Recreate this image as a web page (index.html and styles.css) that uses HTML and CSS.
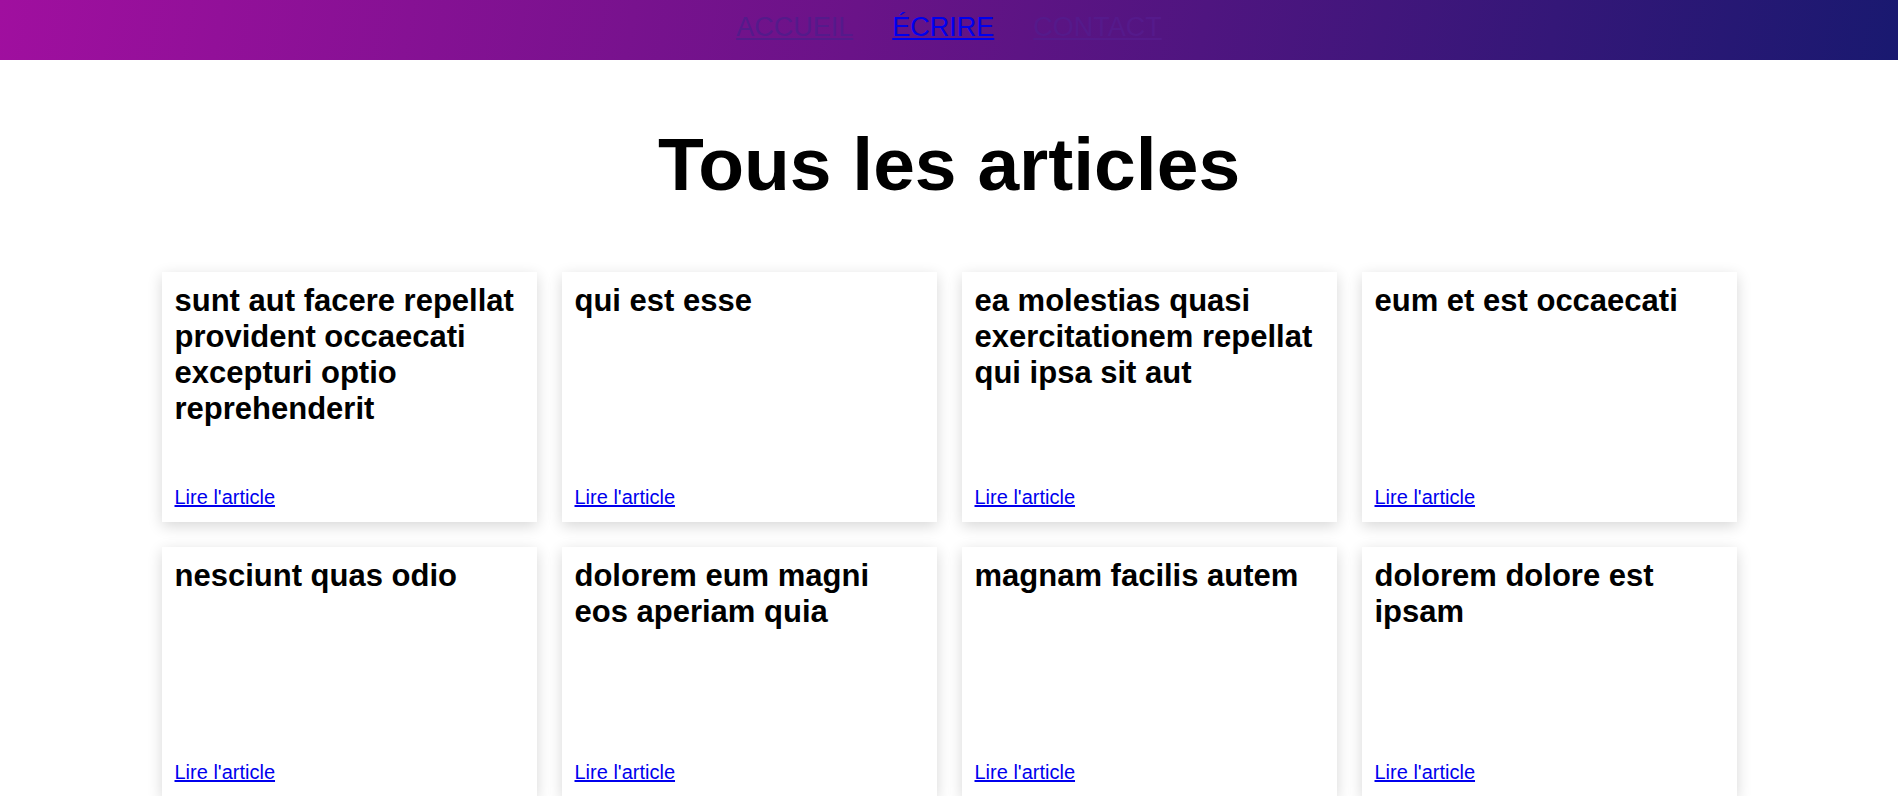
FILE: index.html
```html
<!DOCTYPE html>
<html lang="fr">
<head>
<meta charset="utf-8">
<title>Tous les articles</title>
<link rel="stylesheet" href="styles.css">
</head>
<body>
<header class="topbar">
  <nav class="nav">
    <a class="nav-link visited" href="#">Accueil</a>
    <a class="nav-link" href="#">Écrire</a>
    <a class="nav-link visited" href="#">Contact</a>
  </nav>
</header>
<main class="page">
  <h1 class="page-title">Tous les articles</h1>
  <section class="grid">
    <article class="card"><h2 class="card-title">sunt aut facere repellat provident occaecati excepturi optio reprehenderit</h2><a class="card-link" href="#">Lire l'article</a></article>
    <article class="card"><h2 class="card-title">qui est esse</h2><a class="card-link" href="#">Lire l'article</a></article>
    <article class="card"><h2 class="card-title">ea molestias quasi exercitationem repellat qui ipsa sit aut</h2><a class="card-link" href="#">Lire l'article</a></article>
    <article class="card"><h2 class="card-title">eum et est occaecati</h2><a class="card-link" href="#">Lire l'article</a></article>
    <article class="card"><h2 class="card-title">nesciunt quas odio</h2><a class="card-link" href="#">Lire l'article</a></article>
    <article class="card"><h2 class="card-title">dolorem eum magni eos aperiam quia</h2><a class="card-link" href="#">Lire l'article</a></article>
    <article class="card"><h2 class="card-title">magnam facilis autem</h2><a class="card-link" href="#">Lire l'article</a></article>
    <article class="card"><h2 class="card-title">dolorem dolore est ipsam</h2><a class="card-link" href="#">Lire l'article</a></article>
    <article class="card"><h2 class="card-title">nesciunt iure omnis dolorem tempora et accusantium</h2><a class="card-link" href="#">Lire l'article</a></article>
    <article class="card"><h2 class="card-title">optio molestias id quia eum</h2><a class="card-link" href="#">Lire l'article</a></article>
    <article class="card"><h2 class="card-title">et ea vero quia laudantium autem</h2><a class="card-link" href="#">Lire l'article</a></article>
    <article class="card"><h2 class="card-title">in quibusdam tempore odit est dolorem</h2><a class="card-link" href="#">Lire l'article</a></article>
  </section>
</main>
</body>
</html>
```
FILE: styles.css
```css
html, body {
  margin: 0;
  padding: 0;
  background: #ffffff;
  font-family: "Liberation Sans", Arial, sans-serif;
  color: #000000;
}

.topbar {
  height: 60px;
  background: linear-gradient(100deg, #a00f9f 0%, #6a1388 45%, #191970 100%);
  display: flex;
  justify-content: center;
  align-items: flex-start;
}

.nav {
  display: flex;
  gap: 39px;
  padding-top: 12px;
}

.nav-link {
  font-size: 27px;
  line-height: 31px;
  text-transform: uppercase;
  color: #0000ee;
  text-decoration: underline;
}

.nav-link.visited {
  color: #551a8b;
}

.page {
  padding: 0 0 40px;
}

.page-title {
  margin: 0;
  padding: 62px 0 65px;
  font-size: 75px;
  line-height: 85px;
  font-weight: bold;
  text-align: center;
}

.grid {
  display: grid;
  grid-template-columns: repeat(4, 375px);
  gap: 25px;
  justify-content: center;
}

.card {
  height: 250px;
  box-sizing: border-box;
  padding: 11px 12px 13px 13px;
  background: #ffffff;
  box-shadow: 0 4px 14px rgba(0, 0, 0, 0.16);
  display: flex;
  flex-direction: column;
  justify-content: space-between;
}

.card-title {
  margin: 0;
  font-size: 31px;
  line-height: 36px;
  font-weight: bold;
}

.card-link {
  font-size: 20px;
  line-height: 23px;
  color: #0000ee;
  text-decoration: underline;
}
```
